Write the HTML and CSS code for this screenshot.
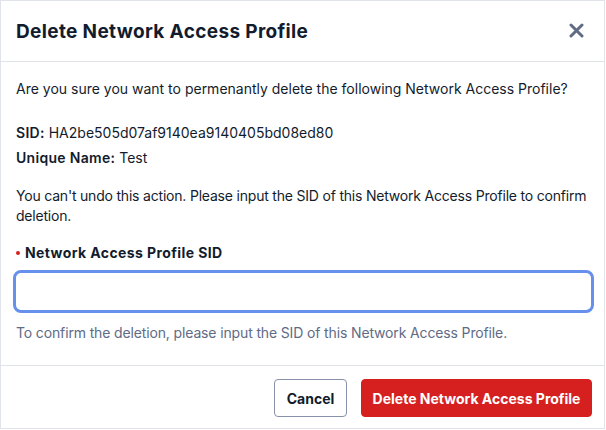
FILE: index.html
```html
<!DOCTYPE html>
<html>
<head>
<meta charset="utf-8">
<link rel="stylesheet" href="styles.css">
</head>
<body>
<div class="modal">
  <header class="modal-header">
    <h2 class="title">Delete Network Access Profile</h2>
    <button class="close" aria-label="Close">
      <svg width="15" height="15" viewBox="0 0 15 15"><path d="M2 2 L13 13 M13 2 L2 13" stroke="#606b85" stroke-width="3" stroke-linecap="round"/></svg>
    </button>
  </header>
  <section class="modal-body">
    <p class="intro">Are you sure you want to permenantly delete the following Network Access Profile?</p>
    <p class="detail sid"><b>SID:</b> HA2be505d07af9140ea9140405bd08ed80</p>
    <p class="detail uname"><b>Unique Name:</b> Test</p>
    <p class="warn">You can't undo this action. Please input the SID of this Network Access Profile to confirm<br>deletion.</p>
    <label class="label"><span class="dot"></span>Network Access Profile SID</label>
    <input class="field" type="text">
    <p class="help">To confirm the deletion, please input the SID of this Network Access Profile.</p>
  </section>
  <footer class="modal-footer">
    <button class="btn btn-secondary">Cancel</button>
    <button class="btn btn-destructive">Delete Network Access Profile</button>
  </footer>
</div>
</body>
</html>
```
FILE: styles.css
```css
* { box-sizing: border-box; }
html, body { margin: 0; padding: 0; background: #fff; }
body { font-family: Inter, "Noto Sans", sans-serif; color: #121c2d; font-size: 14px; line-height: 20px; }
.modal { width: 605px; height: 429px; border: 1px solid #e1e3ea; display: flex; flex-direction: column; }
.modal-header { height: 61px; border-bottom: 1px solid #e1e3ea; display: flex; align-items: center; justify-content: space-between; padding: 0 20px 0 15px; }
.title { margin: 0; font-size: 19px; letter-spacing: 0.35px; font-weight: 700; line-height: 28px; padding-top: 1px; }
.close { border: 0; background: none; padding: 0; width: 15px; height: 15px; display: flex; margin-top: -1px; }
.modal-body { padding: 17px 13px 22px 15px; border-bottom: 1px solid #e1e3ea; }
.modal-body p { margin: 0; white-space: nowrap; }
.intro { margin-bottom: 24px !important; }
.detail b { font-weight: 600; letter-spacing: 0.3px; }
.sid { margin-bottom: 5px !important; }
.uname { margin-bottom: 18px !important; }
.warn { margin-bottom: 17px !important; letter-spacing: -0.2px; }
.label { display: flex; align-items: center; font-weight: 700; letter-spacing: 0.4px; margin-bottom: 7px; }
.dot { width: 4px; height: 4px; border-radius: 50%; background: #d61f1f; margin-right: 5px; margin-left: 0; }
.field { display: block; width: calc(100% + 6px); margin: 0 -3px 10px; height: 43px; border: 3px solid #6690ec; border-radius: 8px; outline: none; font: inherit; }
.help { color: #606b85; letter-spacing: -0.14px; }
.modal-footer { flex: 1; display: flex; justify-content: flex-end; align-items: flex-start; gap: 14px; padding: 13px 12px 0 0; }
.btn { height: 38px; font-family: inherit; font-size: 14px; font-weight: 700; border-radius: 4px; padding: 0 8px; cursor: pointer; white-space: nowrap; }
.btn-secondary { background: #fff; color: #121c2d; border: 1px solid #8891aa; width: 73px; }
.btn-destructive { background: #d61f1f; color: #fff; border: 1px solid #d61f1f; width: 231px; }
```
